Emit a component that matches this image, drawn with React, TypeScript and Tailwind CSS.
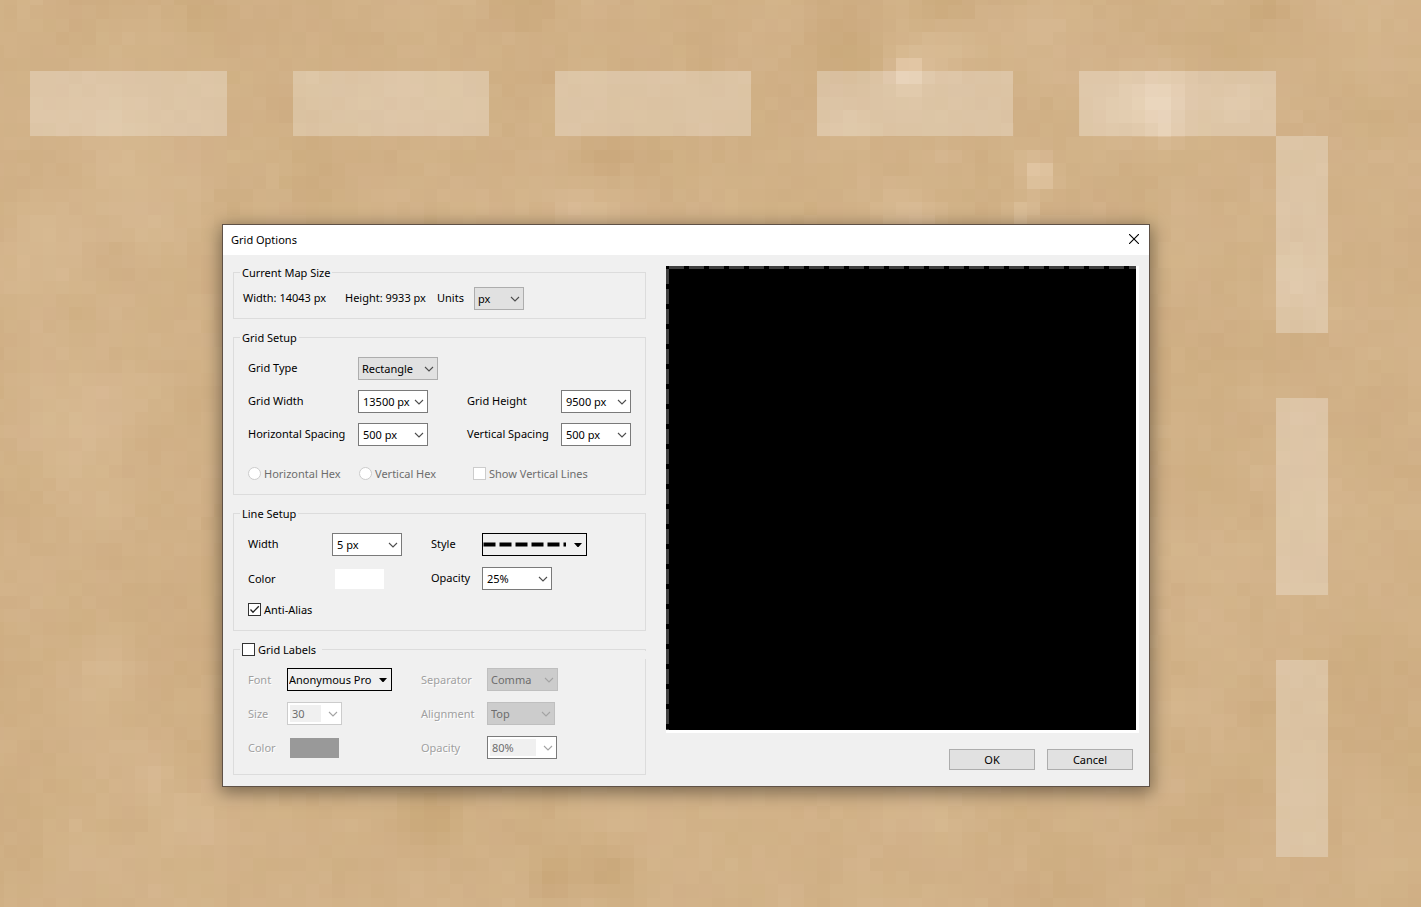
import { useId, type ReactNode } from "react";
import clsx from "clsx";

const CELL = 13.12;

// [x, y, radius in cells, strength]
const SPOTS = [
  [908, 70, 1.6, 20],
  [942, 48, 2.6, 9],
  [1158, 100, 2.4, 22],
  [1166, 128, 1.4, 14],
  [1115, 108, 2.5, 8],
  [1242, 100, 2, 8],
  [850, 125, 2, 7],
  [1040, 174, 1.5, 22],
  [1022, 214, 1.4, 12],
  [910, 216, 2.6, 10],
  [580, 216, 2.5, 7],
  [1290, 285, 3, 6],
  [1040, 20, 3, 5],
  [845, 48, 4, -7],
  [945, 8, 3, -7],
  [1268, 8, 2, -7],
  [1228, 38, 3, -6],
  [1140, 185, 4, -7],
  [210, 12, 3, -6],
  [520, 10, 3, -6],
  [600, 160, 2.5, -5],
  [290, 105, 2, -4],
  [120, 150, 4, 4],
  [150, 210, 4, 6],
  [40, 230, 4, 8],
  [110, 260, 2, -4],
  [80, 420, 5, 4],
  [100, 680, 4, 5],
  [190, 820, 3, 8],
  [150, 775, 2, 4],
  [430, 815, 3, -11],
  [550, 875, 2, -11],
  [610, 872, 2.4, -8],
  [1180, 830, 4, -3],
  [1370, 650, 4, -3],
];

function hash(x: number, y: number, seed: number) {
  let h = Math.imul(x + 101, 374761393) ^ Math.imul(y + 57, 668265263) ^ Math.imul(seed, 1274126177);
  h = Math.imul(h ^ (h >>> 13), 1103515245);
  h = Math.imul(h ^ (h >>> 15), 2246822519);
  return ((h ^ (h >>> 16)) >>> 0) / 4294967295 - 0.5;
}

function noise(x: number, y: number, size: number, seed: number) {
  const px = x / size;
  const py = y / size;
  const ix = Math.floor(px);
  const iy = Math.floor(py);
  const fx = px - ix;
  const fy = py - iy;
  const top = hash(ix, iy, seed) * (1 - fx) + hash(ix + 1, iy, seed) * fx;
  const bottom = hash(ix, iy + 1, seed) * (1 - fx) + hash(ix + 1, iy + 1, seed) * fx;
  return top * (1 - fy) + bottom * fy;
}

function buildParchment() {
  const cells: { x: number; y: number; fill: string }[] = [];
  for (let row = 0; row < 71; row++) {
    for (let col = 0; col < 110; col++) {
      const x = Math.round(30 + (col - 3) * CELL);
      const y = Math.round(71 + (row - 6) * CELL);
      let light = noise(col, row, 8, 1) * 5 + noise(col, row, 3, 2) * 6 + noise(col, row, 1, 3) * 3;
      for (const [sx, sy, radius, strength] of SPOTS) {
        const d = Math.hypot(x + 6 - sx, y + 6 - sy) / (radius * CELL);
        light += strength * Math.exp(-d * d * 1.5);
      }
      const tint = noise(col, row, 2, 4) * 4;
      const r = Math.round(209 + light * 0.8);
      const g = Math.round(177 + light + tint * 0.5);
      const b = Math.round(135 + light * 1.4 - tint * 0.3);
      cells.push({ x, y, fill: `rgb(${r},${g},${b})` });
    }
  }
  return cells;
}

const PARCHMENT = buildParchment();
const DASHES_X = [
  [30, 197],
  [293, 196],
  [555, 196],
  [817, 196],
  [1079, 197],
];
const DASHES_Y = [136, 398, 660];

function MapCanvas() {
  return (
    <svg
      className="absolute inset-0 h-full w-full"
      viewBox="0 0 1421 907"
      preserveAspectRatio="xMinYMin slice"
      shapeRendering="crispEdges"
      aria-hidden="true"
    >
      {PARCHMENT.map((cell) => (
        <rect key={`${cell.x}-${cell.y}`} x={cell.x} y={cell.y} width="14" height="14" fill={cell.fill} />
      ))}
      <g fill="#fff" fillOpacity="0.25">
        {DASHES_X.map(([x, width]) => (
          <rect key={x} x={x} y="71" width={width} height="65" />
        ))}
        {DASHES_Y.map((y) => (
          <rect key={y} x="1276" y={y} width="52" height="197" />
        ))}
      </g>
    </svg>
  );
}

function Chevron({ disabled }: { disabled?: boolean }) {
  return (
    <svg
      className={clsx("pointer-events-none mr-[3px] shrink-0", disabled ? "text-[#a3a3a3]" : "text-[#4d4d4d]")}
      width="10"
      height="6"
      viewBox="0 0 10 6"
      fill="none"
      stroke="currentColor"
      strokeWidth="1.1"
      aria-hidden="true"
    >
      <path d="M1 1 5 5 9 1" />
    </svg>
  );
}

function Arrow() {
  return (
    <svg className="pointer-events-none mr-1 shrink-0" width="8" height="4" viewBox="0 0 8 4" aria-hidden="true">
      <path d="M0 0H8L4.5 4H3.5Z" fill="#000" />
    </svg>
  );
}

type ComboProps = {
  label: string;
  value: string;
  width: string;
  kind?: "list" | "edit";
  disabled?: boolean;
  frame?: string;
  labelClass?: string;
};

// label and box are two neighbouring cells of the surrounding grid
function Combo({ label, value, width, kind = "edit", disabled, frame, labelClass }: ComboProps) {
  const id = useId();
  const list = kind === "list";
  return (
    <>
      <label
        htmlFor={id}
        className={clsx(disabled ? "text-[#a0a0a0] [text-shadow:1px_1px_0_#fff]" : "pb-0.5", labelClass)}
      >
        {label}
      </label>
      <div
        className={clsx(
          "flex h-[23px] items-center border",
          width,
          frame ??
            (list
              ? disabled
                ? "border-[#bfbfbf] bg-[#cccccc]"
                : "border-[#adadad] bg-[#e1e1e1]"
              : "border-[#7a7a7a] bg-white"),
        )}
      >
        <select
          id={id}
          disabled={disabled}
          defaultValue={value}
          className={clsx(
            "min-w-0 flex-1 appearance-none truncate text-clip outline-none disabled:opacity-100",
            list && "h-full pl-[3px]",
            !list && !disabled && "h-full pl-1",
            !list && disabled && "mr-[7px] ml-[2px] h-[17px] bg-[#f0f0f0] pl-[2px]",
            disabled && "text-[#6d6d6d]",
          )}
        >
          <option>{value}</option>
        </select>
        <Chevron disabled={disabled} />
      </div>
    </>
  );
}

function Group({ title, children }: { title: string; children: ReactNode }) {
  return (
    <fieldset className="border border-[#dcdcdc]">
      <legend className="ml-1.5 h-[17px] px-0.5">{title}</legend>
      {children}
    </fieldset>
  );
}

type TickProps = { label: string; type?: "checkbox" | "radio"; checked?: boolean; disabled?: boolean };

function Tick({ label, type = "checkbox", checked, disabled }: TickProps) {
  return (
    <label className={clsx("flex h-[17px] items-center gap-[3px]", disabled && "text-[#6d6d6d]")}>
      <span className="relative flex size-[13px] shrink-0">
        <input
          type={type}
          name={type === "radio" ? "hex" : undefined}
          defaultChecked={checked}
          disabled={disabled}
          className={clsx(
            "peer size-[13px] appearance-none border bg-white",
            type === "radio" && "rounded-full",
            disabled ? "border-[#cccccc]" : "border-[#333333]",
          )}
        />
        <svg
          className="pointer-events-none absolute inset-0 hidden peer-checked:block"
          viewBox="0 0 13 13"
          fill="none"
          stroke="#222"
          strokeWidth="1.3"
          aria-hidden="true"
        >
          <path d="M2.5 6.5 5 9.2 10.8 3.2" />
        </svg>
      </span>
      {label}
    </label>
  );
}

export default function App() {
  return (
    <main className="relative min-h-screen overflow-hidden bg-[#d1b186] pt-[224px] pl-[222px] font-['Noto_Sans','Open_Sans',sans-serif] text-[11px] leading-[17px] text-black">
      <MapCanvas />
      <section
        role="dialog"
        aria-labelledby="dialog-title"
        className="relative w-[928px] border border-[#5f5146] bg-[#f0f0f0] shadow-[0_4px_16px_2px_rgba(0,0,0,0.4)]"
      >
        <header className="flex h-[30px] items-center justify-between bg-white pr-[5px] pb-0.5 pl-2">
          <h1 id="dialog-title">Grid Options</h1>
          <button type="button" aria-label="Close" className="flex size-5 items-center justify-center">
            <svg width="10" height="10" viewBox="0 0 10 10" stroke="#000" strokeWidth="1.1" aria-hidden="true">
              <path d="M0 0 10 10M10 0 0 10" />
            </svg>
          </button>
        </header>

        <form className="flex gap-5 px-[10px]" onSubmit={(e) => e.preventDefault()}>
          <div className="flex w-[413px] shrink-0 flex-col gap-[10px] pt-[9px] pb-[11px]">
            <Group title="Current Map Size">
              <div className="grid grid-cols-[102px_92px_37px_auto] items-center justify-start pt-1.5 pb-2 pl-[9px]">
                <span className="pb-0.5">Width: 14043 px</span>
                <span className="pb-0.5">Height: 9933 px</span>
                <Combo label="Units" value="px" width="w-[50px]" kind="list" />
              </div>
            </Group>

            <Group title="Grid Setup">
              <div className="grid grid-cols-[110px_109px_94px_auto] items-center justify-start gap-y-[10px] pt-[11px] pl-[14px]">
                <Combo label="Grid Type" value="Rectangle" width="w-[80px]" kind="list" />
                <Combo label="Grid Width" value="13500 px" width="w-[70px]" labelClass="col-start-1" />
                <Combo label="Grid Height" value="9500 px" width="w-[70px]" />
                <Combo label="Horizontal Spacing" value="500 px" width="w-[70px]" />
                <Combo label="Vertical Spacing" value="500 px" width="w-[70px]" />
              </div>
              <div className="mt-[19px] grid grid-cols-[111px_114px_auto] justify-start pb-3 pl-[14px]">
                <Tick label="Horizontal Hex" type="radio" disabled />
                <Tick label="Vertical Hex" type="radio" disabled />
                <Tick label="Show Vertical Lines" disabled />
              </div>
            </Group>

            <Group title="Line Setup">
              <div className="grid grid-cols-[84px_99px_51px_auto] items-center justify-start gap-y-[11px] pt-[11px] pb-3 pl-[14px]">
                <Combo label="Width" value="5 px" width="w-[70px]" />
                <span id="line-style" className="pb-0.5">
                  Style
                </span>
                <button
                  type="button"
                  aria-labelledby="line-style"
                  className="flex h-[23px] w-[105px] items-center justify-between border border-black"
                >
                  <svg width="84" height="5" viewBox="0 0 84 5" aria-hidden="true">
                    <path d="M0.5 2.5H83" stroke="#000" strokeWidth="4" strokeDasharray="12 4" />
                  </svg>
                  <Arrow />
                </button>
                <span id="line-color">Color</span>
                <button type="button" aria-labelledby="line-color" className="ml-[3px] h-5 w-[49px] bg-white" />
                <Combo label="Opacity" value="25%" width="w-[70px]" />
                <Tick label="Anti-Alias" checked />
              </div>
            </Group>

            <fieldset className="relative border border-[#dcdcdc]">
              <legend className="ml-1.5 h-[17px] pr-1.5 pl-0.5">
                <Tick label="Grid Labels" />
              </legend>
              <div className="absolute -top-2 -right-px h-[9px] w-px border-t border-[#dcdcdc] bg-[#f0f0f0]" />
              <div className="grid grid-cols-[39px_134px_66px_auto] items-center justify-start gap-y-[11px] pt-[10px] pb-[15px] pl-[14px]">
                <label htmlFor="label-font" className="text-[#a0a0a0] [text-shadow:1px_1px_0_#fff]">
                  Font
                </label>
                <div className="flex h-[23px] w-[105px] items-center border border-black">
                  <select
                    id="label-font"
                    className="mr-[7px] h-full min-w-0 flex-1 appearance-none overflow-hidden pl-px text-clip outline-none"
                  >
                    <option>Anonymous Pro</option>
                  </select>
                  <Arrow />
                </div>
                <Combo label="Separator" value="Comma" width="w-[71px]" kind="list" disabled />
                <Combo label="Size" value="30" width="w-[55px]" frame="border-[#cccccc] bg-white" disabled />
                <Combo label="Alignment" value="Top" width="w-[68px]" kind="list" disabled />
                <span id="label-color" className="text-[#a0a0a0] [text-shadow:1px_1px_0_#fff]">
                  Color
                </span>
                <button
                  type="button"
                  aria-labelledby="label-color"
                  disabled
                  className="ml-[3px] h-5 w-[49px] bg-[#999999]"
                />
                <Combo label="Opacity" value="80%" width="w-[70px]" disabled />
              </div>
            </fieldset>
          </div>

          <div className="flex min-w-0 flex-1 flex-col gap-4 pt-[11px] pb-4">
            <div className="flex flex-1 bg-white pr-[3px] pb-[3px]">
              <div className="relative flex-1 bg-black">
                <div className="absolute top-0 right-0 left-[3px] h-[3px] bg-[repeating-linear-gradient(90deg,#404040_0_15px,#000_15px_20px)]" />
                <div className="absolute top-[3px] bottom-0 left-0 w-[3px] bg-[repeating-linear-gradient(180deg,#404040_0_15px,#000_15px_20px)]" />
              </div>
            </div>
            <div className="flex justify-end gap-3 pr-1.5">
              <button type="submit" className="h-[21px] w-[86px] border border-[#adadad] bg-[#e1e1e1]">
                OK
              </button>
              <button type="button" className="h-[21px] w-[86px] border border-[#adadad] bg-[#e1e1e1]">
                Cancel
              </button>
            </div>
          </div>
        </form>
      </section>
    </main>
  );
}
